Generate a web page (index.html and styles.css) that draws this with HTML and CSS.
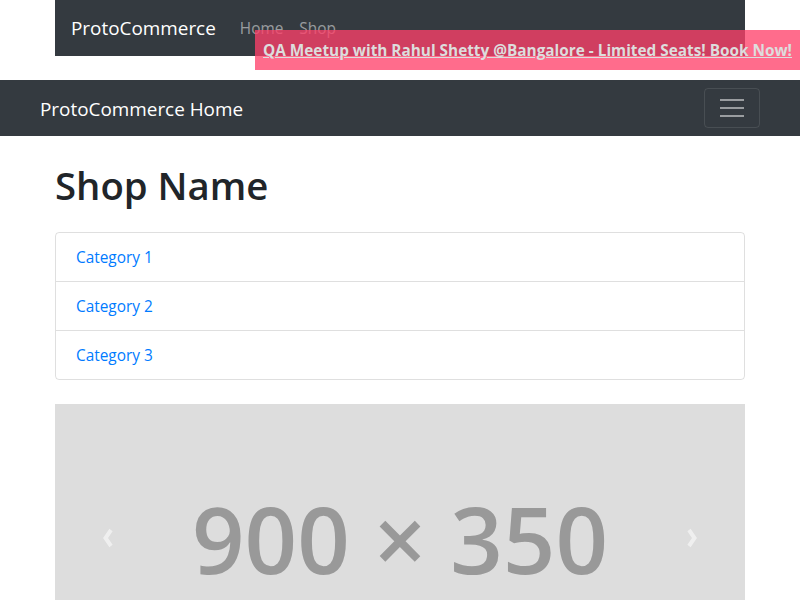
FILE: index.html
```html
<!DOCTYPE html>
<html>
<head>
<meta charset="utf-8">
<link rel="stylesheet" href="styles.css">
</head>
<body>
<div class="top-wrap">
  <nav class="top-nav">
    <span class="brand">ProtoCommerce</span>
    <a class="top-link" href="#">Home</a>
    <a class="top-link" href="#">Shop</a>
  </nav>
  <div class="banner"><a href="#">QA Meetup with Rahul Shetty @Bangalore - Limited Seats! Book Now!</a></div>
</div>
<nav class="main-nav">
  <span class="brand">ProtoCommerce Home</span>
  <button class="toggler"><span class="bar"></span><span class="bar"></span><span class="bar"></span></button>
</nav>
<main class="container">
  <h1 class="title">Shop Name</h1>
  <div class="list-group">
    <a class="list-item" href="#">Category 1</a>
    <a class="list-item" href="#">Category 2</a>
    <a class="list-item" href="#">Category 3</a>
  </div>
  <div class="carousel">
    <span class="arrow">
      <svg width="12" height="20" viewBox="0 0 12 20"><path d="M9 2 L3.5 10 L9 18" fill="none" stroke="#fff" stroke-width="4"/></svg>
    </span>
    <span class="placeholder">900 × 350</span>
    <span class="arrow">
      <svg width="12" height="20" viewBox="0 0 12 20"><path d="M3 2 L8.5 10 L3 18" fill="none" stroke="#fff" stroke-width="4"/></svg>
    </span>
  </div>
</main>
</body>
</html>
```
FILE: styles.css
```css
* { box-sizing: border-box; }
body {
  margin: 0;
  font-family: "Open Sans", "Noto Sans", sans-serif;
  font-size: 15.4px;
  color: #212529;
  background: #fff;
}
.top-wrap {
  position: relative;
  height: 80px;
}
.top-nav {
  margin: 0 55px;
  height: 56px;
  background: #343a40;
  display: flex;
  align-items: center;
  padding: 0 16px;
}
.brand {
  color: #fff;
  font-size: 18.9px;
  white-space: nowrap;
}
.main-nav .brand { padding-top: 2px; }
.top-nav .brand { margin-right: 24px; }
.top-link {
  color: rgba(255,255,255,.5);
  text-decoration: none;
  margin-right: 16px;
}
.banner {
  position: absolute;
  left: 255px;
  top: 30px;
  right: 0;
  height: 40px;
  background: rgba(255, 64, 105, 0.77);
  display: flex;
  align-items: center;
  padding-left: 8px;
  white-space: nowrap;
}
.banner a {
  color: #ddd;
  font-weight: 700;
  font-size: 15.35px;
  text-decoration: underline;
}
.main-nav {
  height: 56px;
  background: #343a40;
  display: flex;
  align-items: center;
  justify-content: space-between;
  padding: 0 40px;
}
.toggler {
  width: 56px;
  height: 40px;
  background: transparent;
  border: 1px solid rgba(255,255,255,.1);
  border-radius: 4px;
  display: flex;
  flex-direction: column;
  align-items: center;
  justify-content: center;
  gap: 6px;
  padding: 0;
}
.bar {
  display: block;
  width: 24px;
  height: 2px;
  background: rgba(255,255,255,.5);
}
.container {
  width: 690px;
  margin: 0 auto;
}
.title {
  font-size: 38.3px;
  font-weight: 600;
  margin: 0;
  padding: 25px 0 23px;
  line-height: 48px;
}
.list-group {
  border: 1px solid rgba(0,0,0,.125);
  border-radius: 4px;
  display: flex;
  flex-direction: column;
}
.list-item {
  color: #007bff;
  text-decoration: none;
  padding: 13px 20px 11px;
  line-height: 24px;
}
.list-item + .list-item { border-top: 1px solid rgba(0,0,0,.125); }
.carousel {
  margin-top: 24px;
  height: 268px;
  background: #ddd;
  display: flex;
  align-items: center;
  justify-content: space-between;
  padding: 0 47px 0 47px;
}
.arrow {
  opacity: .55;
  display: flex;
}
.placeholder {
  color: #999;
  font-size: 92px;
  font-weight: 600;
}
```
